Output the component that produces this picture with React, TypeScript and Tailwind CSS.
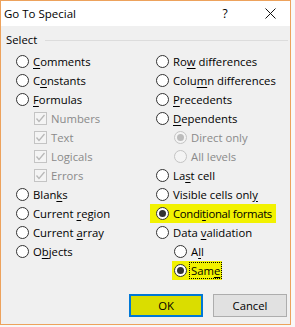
import React from 'react';

type Opt = {
  label: string;
  hot?: number;
  kind?: 'radio' | 'check';
  checked?: boolean;
  disabled?: boolean;
  sub?: 'check' | 'radio';
  mark?: 'wide' | 'small';
  focus?: boolean;
};

const Label = ({ text, hot, focus }: { text: string; hot?: number; focus?: boolean }) => {
  const body =
    hot === undefined ? (
      text
    ) : (
      <>
        {text.slice(0, hot)}
        <span className="underline underline-offset-[2px] decoration-1">{text[hot]}</span>
        {text.slice(hot + 1)}
      </>
    );
  return (
    <span className={focus ? 'outline outline-1 outline-dotted outline-black px-[1px] -mx-[1px]' : ''}>
      {body}
    </span>
  );
};

const Radio = ({ checked, disabled }: { checked?: boolean; disabled?: boolean }) => (
  <span
    className={`w-[13px] h-[13px] shrink-0 rounded-full border flex items-center justify-center ${
      disabled ? 'border-[#c4c4c4] bg-[#f4f4f4]' : 'border-[#333333] bg-white'
    }`}
  >
    {checked && (
      <span className={`w-[7px] h-[7px] rounded-full ${disabled ? 'bg-[#bcbcbc]' : 'bg-[#333333]'}`} />
    )}
  </span>
);

const Check = () => (
  <span className="w-[13px] h-[13px] shrink-0 border border-[#c4c4c4] bg-[#f4f4f4] flex items-center justify-center">
    <svg width="11" height="11" viewBox="0 0 11 11" fill="none">
      <path d="M1.5 5.5 L4 8.5 L9.5 2" stroke="#b8b8b8" strokeWidth="1.3" />
    </svg>
  </span>
);

const Row = ({ o }: { o: Opt }) => {
  const box = o.kind === 'check' ? <Check /> : <Radio checked={o.checked} disabled={o.disabled} />;
  const indent = o.sub ? 'ml-[18px]' : '';
  let hl = '';
  if (o.mark === 'wide') hl = 'bg-[#f2f200] -ml-[6px] pl-[6px] w-[126px] tracking-[-0.3px]';
  if (o.mark === 'small') hl = 'bg-[#f2f200] ml-[16px] pl-[2px] pr-[2px]';
  return (
    <div className={`h-[19px] flex items-center self-start gap-[4px] whitespace-nowrap ${indent} ${hl}`}>
      {box}
      <span className={o.disabled ? 'text-[#8a8a8a]' : 'text-black'}>
        <Label text={o.label} hot={o.hot} focus={o.focus} />
      </span>
    </div>
  );
};

const left: Opt[] = [
  { label: 'Comments', hot: 0 },
  { label: 'Constants', hot: 1 },
  { label: 'Formulas', hot: 0 },
  { label: 'Numbers', kind: 'check', disabled: true, sub: 'check' },
  { label: 'Text', kind: 'check', disabled: true, sub: 'check' },
  { label: 'Logicals', kind: 'check', disabled: true, sub: 'check' },
  { label: 'Errors', kind: 'check', disabled: true, sub: 'check' },
  { label: 'Blanks', hot: 4 },
  { label: 'Current region', hot: 8 },
  { label: 'Current array', hot: 8 },
  { label: 'Objects', hot: 1 },
];

const right: Opt[] = [
  { label: 'Row differences', hot: 2 },
  { label: 'Column differences', hot: 4 },
  { label: 'Precedents', hot: 0 },
  { label: 'Dependents', hot: 0 },
  { label: 'Direct only', disabled: true, checked: true, sub: 'radio' },
  { label: 'All levels', disabled: true, sub: 'radio' },
  { label: 'Last cell', hot: 2 },
  { label: 'Visible cells only', hot: 17 },
  { label: 'Conditional formats', hot: 5, checked: true, mark: 'wide' },
  { label: 'Data validation', hot: 5 },
  { label: 'All', hot: 1, sub: 'radio' },
  { label: 'Same', hot: 3, checked: true, mark: 'small', focus: true },
];

export default function App() {
  return (
    <div
      className="w-[295px] h-[327px] bg-[#f8f8f8] text-[11.3px] leading-[16px]"
      style={{ fontFamily: '"Open Sans", "Noto Sans", sans-serif' }}
    >
      <div className="w-[291px] h-[325px] border border-[#eda25c] bg-[#f0f0f0] flex flex-col">
        <div className="h-[25px] bg-white flex items-center pl-[3px] text-[11.5px]">
          <span className="flex-1">Go To Special</span>
          <span className="w-[12px] text-center mr-[34px] text-[12px]">?</span>
          <svg width="11" height="11" viewBox="0 0 11 11" className="mr-[14px]">
            <path d="M0.5 0.5 L10.5 10.5 M10.5 0.5 L0.5 10.5" stroke="#111" strokeWidth="1" />
          </svg>
        </div>

        <div className="flex items-center pt-[6px] pl-[5px] pr-[2px]">
          <span>Select</span>
          <span className="flex-1 h-px bg-[#dcdcdc] ml-[8px]" />
        </div>

        <div className="grid grid-cols-[140px_1fr] pl-[15px] mt-[4px]">
          <div className="flex flex-col">
            {left.map(o => (
              <Row key={o.label} o={o} />
            ))}
          </div>
          <div className="flex flex-col">
            {right.map(o => (
              <Row key={o.label} o={o} />
            ))}
          </div>
        </div>

        <div className="mt-auto flex justify-end gap-[10px] pr-[3px] pb-[7px]">
          <button className="w-[74px] h-[23px] border-2 border-[#0078d7] bg-[#dadd00] text-black">OK</button>
          <button className="w-[74px] h-[23px] border border-[#adadad] bg-[#e1e1e1] text-black">Cancel</button>
        </div>
      </div>
    </div>
  );
}
